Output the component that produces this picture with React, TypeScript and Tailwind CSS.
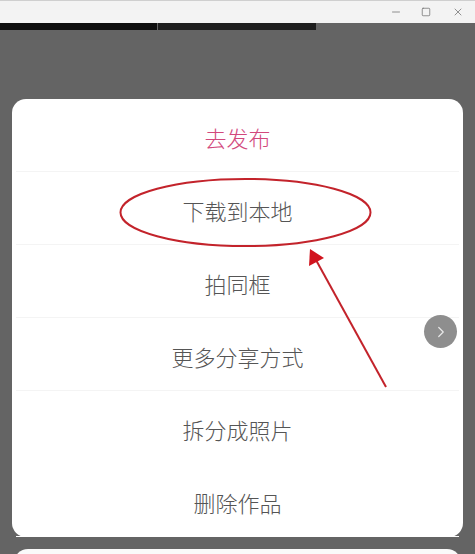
import { ChevronRight, Minus, Square, X } from 'lucide-react'

const ITEMS = [
  { label: '去发布', accent: true },
  { label: '下载到本地' },
  { label: '拍同框' },
  { label: '更多分享方式' },
  { label: '拆分成照片', noLine: true },
  { label: '删除作品', noLine: true },
]

function TitleBar() {
  return (
    <div className="flex h-[23px] items-center justify-end border-t border-[#cfcfcf] bg-[#f3f3f3] pr-[11px] text-[#6f6f6f]">
      <Minus className="mr-[19px] size-[12px]" strokeWidth={1.5} />
      <Square className="mr-[21px] size-[10px]" strokeWidth={1.8} />
      <X className="size-[12px]" strokeWidth={1.5} />
    </div>
  )
}

function Annotation() {
  // red marker drawn over the screenshot
  return (
    <svg className="pointer-events-none absolute left-0 top-0" width="475" height="554" viewBox="0 0 475 554">
      <ellipse cx="245.5" cy="212.5" rx="125" ry="33.5" fill="none" stroke="#c3232b" strokeWidth="2" />
      <line x1="386" y1="387" x2="316" y2="260" stroke="#c3232b" strokeWidth="2" />
      <polygon points="310,249 309,266 324,258" fill="#d1131d" />
    </svg>
  )
}

export default function App() {
  return (
    <div
      className="relative h-[554px] w-[475px] overflow-hidden bg-[#646464]"
      style={{ fontFamily: '"Noto Sans CJK SC", "Noto Sans", sans-serif' }}
    >
      <TitleBar />
      <div className="flex h-[7px]">
        <div className="w-[157px] bg-[#0e0e0e]" />
        <div className="ml-px w-[158px] bg-[#1e1e1e]" />
      </div>

      <div className="mx-[12px] mt-[69px] w-[451px] rounded-[14px] bg-white">
        {ITEMS.map((it) => (
          <div key={it.label} className="px-1">
            <div
              className={`flex h-[72px] items-center justify-center pt-[3px] text-[22px] font-light leading-none ${
                it.accent ? 'text-[#d2497c]' : 'text-[#555555]'
              }`}
            >
              {it.label}
            </div>
            <div className={`h-px ${it.noLine ? 'bg-white' : 'bg-[#f4f4f4]'}`} />
          </div>
        ))}
      </div>

      <div className="mx-[14px] mt-[12px] h-[20px] rounded-t-[14px] bg-[#fafafa]" />

      <div className="absolute left-[424px] top-[315px] flex size-[33px] items-center justify-center rounded-full bg-[#8e8e8e] text-[#e8e8e8]">
        <ChevronRight className="size-[18px]" strokeWidth={1.6} />
      </div>

      <Annotation />
    </div>
  )
}
